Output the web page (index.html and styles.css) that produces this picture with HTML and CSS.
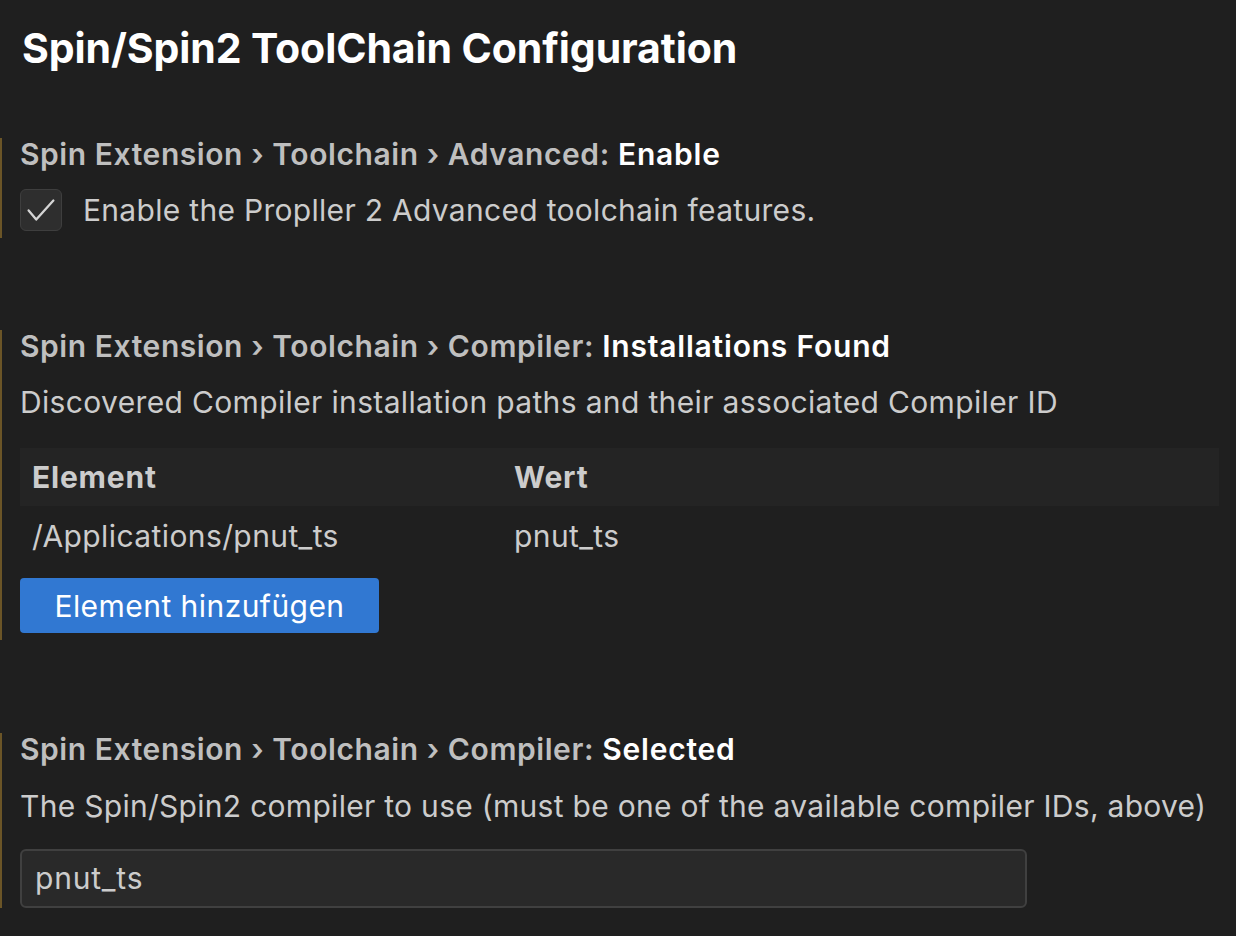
FILE: index.html
```html
<!DOCTYPE html>
<html lang="de">
<head>
<meta charset="utf-8">
<title>Spin/Spin2 ToolChain Configuration</title>
<link rel="stylesheet" href="styles.css">
</head>
<body>
<div class="page">
  <h1 class="page-title">Spin/Spin2 ToolChain Configuration</h1>

  <section class="setting s1">
    <div class="setting-title"><span class="cat">Spin Extension › Toolchain › Advanced: </span><span class="key">Enable</span></div>
    <label class="check-row">
      <span class="checkbox">
        <svg viewBox="0 0 42 42" width="42" height="42"><path d="M8 21.5 L16 31 L34 11" fill="none" stroke="#d4d4d4" stroke-width="2.4" stroke-linecap="round" stroke-linejoin="round"/></svg>
      </span>
      <span class="check-text">Enable the Propller 2 Advanced toolchain features.</span>
    </label>
  </section>

  <section class="setting s2">
    <div class="setting-title"><span class="cat">Spin Extension › Toolchain › Compiler: </span><span class="key">Installations Found</span></div>
    <div class="desc">Discovered Compiler installation paths and their associated Compiler ID</div>
    <div class="table">
      <div class="trow thead"><div class="cell c1">Element</div><div class="cell">Wert</div></div>
      <div class="trow"><div class="cell c1">/Applications/pnut_ts</div><div class="cell">pnut_ts</div></div>
    </div>
    <button class="btn">Element hinzufügen</button>
  </section>

  <section class="setting s3">
    <div class="setting-title"><span class="cat">Spin Extension › Toolchain › Compiler: </span><span class="key">Selected</span></div>
    <div class="desc desc3">The Spin/Spin2 compiler to use (must be one of the available compiler IDs, above)</div>
    <div class="input">pnut_ts</div>
  </section>
</div>
</body>
</html>
```

FILE: styles.css
```css
html, body {
  margin: 0;
  padding: 0;
  background: #1f1f1f;
}
body {
  font-family: Inter, "Noto Sans", "Liberation Sans", sans-serif;
  color: #cccccc;
  width: 1236px;
  height: 936px;
  overflow: hidden;
}
.page {
  display: flex;
  flex-direction: column;
}
.page-title {
  margin: 0;
  padding: 22px 0 0 22px;
  height: 116px;
  font-size: 41px;
  line-height: 52px;
  font-weight: 700;
  color: #ffffff;
  letter-spacing: -0.1px;
}
.setting {
  border-left: 2px solid #6b5527;
  padding-left: 18px;
  display: flex;
  flex-direction: column;
  align-items: flex-start;
}
.s1 { padding-bottom: 7px; }
.s2 { margin-top: 92px; padding-bottom: 7px; }
.s3 { margin-top: 93px; }
.setting-title {
  font-size: 30px;
  line-height: 32px;
  font-weight: 600;
  white-space: nowrap;
  letter-spacing: 0.57px;
}
.cat { color: #bfbfbf; }
.key { color: #ffffff; letter-spacing: 0.8px; }
.check-row {
  display: flex;
  align-items: center;
  margin-top: 19px;
  height: 42px;
}
.checkbox {
  width: 40px;
  height: 40px;
  border: 1px solid #3e3e3e;
  border-radius: 6px;
  background: #2e2e2e;
  display: flex;
  align-items: center;
  justify-content: center;
  overflow: hidden;
}
.checkbox svg { display: block; }
.check-text {
  margin-left: 21px;
  font-size: 30px;
  letter-spacing: 0.3px;
}
.desc {
  margin-top: 24px;
  font-size: 30px;
  line-height: 32px;
  white-space: nowrap;
  letter-spacing: 0.35px;
}
.desc3 { letter-spacing: 0.29px; }
.table {
  margin-top: 30px;
  width: 1199px;
  font-size: 30px;
  letter-spacing: 0.4px;
}
.trow {
  display: flex;
  height: 60px;
  align-items: center;
}
.thead {
  height: 58px;
  background: #242424;
  font-weight: 700;
  letter-spacing: 0.8px;
}
.cell { padding-left: 12px; }
.c1 { width: 470px; }
.btn {
  margin-top: 12px;
  width: 359px;
  height: 55px;
  border: 0;
  border-radius: 4px;
  background: #3178d2;
  color: #ffffff;
  font-family: inherit;
  font-size: 30px;
  letter-spacing: 0.45px;
  padding: 0;
}
.s3 .desc { margin-top: 25px; }
.input {
  margin-top: 27px;
  box-sizing: border-box;
  width: 1007px;
  height: 59px;
  border: 2px solid #404040;
  border-radius: 6px;
  background: #292929;
  font-size: 30px;
  letter-spacing: 0.8px;
  line-height: 55px;
  padding-left: 13px;
  color: #cccccc;
}
```
